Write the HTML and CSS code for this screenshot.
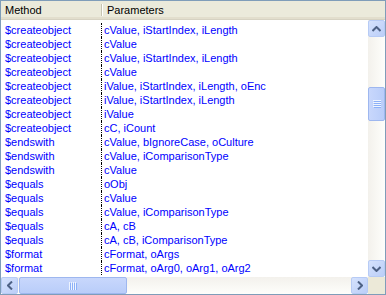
FILE: index.html
```html
<!DOCTYPE html>
<html>
<head>
<meta charset="utf-8">
<link rel="stylesheet" href="styles.css">
</head>
<body>
<div class="win">
  <div class="header">
    <div class="hcell c1">Method</div>
    <div class="hcell c2">Parameters</div>
  </div>
  <div class="main">
    <div class="content">
      <div class="rows">
        <div class="row"><div class="cell c1">$createobject</div><div class="cell c2">cValue, iStartIndex, iLength</div></div>
        <div class="row"><div class="cell c1">$createobject</div><div class="cell c2">cValue</div></div>
        <div class="row"><div class="cell c1">$createobject</div><div class="cell c2">cValue, iStartIndex, iLength</div></div>
        <div class="row"><div class="cell c1">$createobject</div><div class="cell c2">cValue</div></div>
        <div class="row"><div class="cell c1">$createobject</div><div class="cell c2">iValue, iStartIndex, iLength, oEnc</div></div>
        <div class="row"><div class="cell c1">$createobject</div><div class="cell c2">iValue, iStartIndex, iLength</div></div>
        <div class="row"><div class="cell c1">$createobject</div><div class="cell c2">iValue</div></div>
        <div class="row"><div class="cell c1">$createobject</div><div class="cell c2">cC, iCount</div></div>
        <div class="row"><div class="cell c1">$endswith</div><div class="cell c2">cValue, bIgnoreCase, oCulture</div></div>
        <div class="row"><div class="cell c1">$endswith</div><div class="cell c2">cValue, iComparisonType</div></div>
        <div class="row"><div class="cell c1">$endswith</div><div class="cell c2">cValue</div></div>
        <div class="row"><div class="cell c1">$equals</div><div class="cell c2">oObj</div></div>
        <div class="row"><div class="cell c1">$equals</div><div class="cell c2">cValue</div></div>
        <div class="row"><div class="cell c1">$equals</div><div class="cell c2">cValue, iComparisonType</div></div>
        <div class="row"><div class="cell c1">$equals</div><div class="cell c2">cA, cB</div></div>
        <div class="row"><div class="cell c1">$equals</div><div class="cell c2">cA, cB, iComparisonType</div></div>
        <div class="row"><div class="cell c1">$format</div><div class="cell c2">cFormat, oArgs</div></div>
        <div class="row"><div class="cell c1">$format</div><div class="cell c2">cFormat, oArg0, oArg1, oArg2</div></div>
      </div>
    </div>
    <div class="vscroll">
      <div class="sbtn"><svg width="9" height="6" viewBox="0 0 9 6"><path d="M0.5 5 L4.5 1 L8.5 5" fill="none" stroke="#4D6185" stroke-width="2"/></svg></div>
      <div class="vtrack">
        <div class="vthumb"><svg width="8" height="8" viewBox="0 0 8 8"><path d="M0 0.5H8M0 2.5H8M0 4.5H8M0 6.5H8" stroke="#EEF4FE" stroke-width="1"/><path d="M1 1.5H8M1 3.5H8M1 5.5H8M1 7.5H8" stroke="#8CB0F8" stroke-width="1"/></svg></div>
      </div>
      <div class="sbtn"><svg width="9" height="6" viewBox="0 0 9 6"><path d="M0.5 1 L4.5 5 L8.5 1" fill="none" stroke="#4D6185" stroke-width="2"/></svg></div>
    </div>
  </div>
  <div class="hbar">
    <div class="hscroll">
      <div class="sbtn"><svg width="6" height="9" viewBox="0 0 6 9"><path d="M5 0.5 L1 4.5 L5 8.5" fill="none" stroke="#4D6185" stroke-width="2"/></svg></div>
      <div class="htrack">
        <div class="hthumb"><svg width="8" height="8" viewBox="0 0 8 8"><path d="M0.5 0V8M2.5 0V8M4.5 0V8M6.5 0V8" stroke="#EEF4FE" stroke-width="1"/><path d="M1.5 1V8M3.5 1V8M5.5 1V8M7.5 1V8" stroke="#8CB0F8" stroke-width="1"/></svg></div>
      </div>
      <div class="sbtn"><svg width="6" height="9" viewBox="0 0 6 9"><path d="M1 0.5 L5 4.5 L1 8.5" fill="none" stroke="#4D6185" stroke-width="2"/></svg></div>
    </div>
    <div class="corner"></div>
  </div>
</div>
</body>
</html>
```

FILE: styles.css
```css
html, body {
  margin: 0;
  padding: 0;
  background: #ffffff;
}
.win {
  width: 386px;
  height: 295px;
  box-sizing: border-box;
  border: 1px solid #7F9DB9;
  display: flex;
  flex-direction: column;
  font-family: "Liberation Sans", Arial, sans-serif;
  font-size: 11px;
  background: #fff;
  overflow: hidden;
}
.main {
  flex: 1;
  display: flex;
  min-height: 0;
}
.content {
  flex: 1;
  display: flex;
  flex-direction: column;
  min-width: 0;
  overflow: hidden;
}
.header {
  height: 19px;
  flex: none;
  display: flex;
  background: #EBEADB;
  border-bottom: 1px solid #D6D2C2;
  box-shadow: inset 0 -2px 0 #E2DECD;
  box-sizing: border-box;
}
.hcell {
  color: #000;
  line-height: 18px;
  box-sizing: border-box;
  white-space: nowrap;
}
.hcell.c1 {
  width: 101px;
  padding-left: 4px;
  position: relative;
}
.hcell.c1::after {
  content: "";
  position: absolute;
  right: 0;
  top: 3px;
  height: 12px;
  width: 1px;
  background: #C7C5B2;
  box-shadow: 1px 0 0 #fff;
}
.hcell.c2 {
  padding-left: 5px;
  flex: 1;
}
.rows {
  padding-top: 3px;
}
.row {
  display: flex;
  height: 14px;
  line-height: 14px;
  color: #0000FF;
  white-space: nowrap;
}
.cell.c1 {
  width: 101px;
  padding-left: 4px;
  box-sizing: border-box;
  border-right: 1px dotted #000;
}
.cell.c2 {
  padding-left: 2px;
}
.vscroll {
  width: 17px;
  flex: none;
  display: flex;
  flex-direction: column;
  background: linear-gradient(to right, #F3F1EC, #FEFEFB);
}
.sbtn {
  width: 17px;
  height: 17px;
  box-sizing: border-box;
  border: 1px solid #B7CBF5;
  border-radius: 2px;
  background: linear-gradient(135deg, #D5E2FD, #BBCEF8);
  display: flex;
  align-items: center;
  justify-content: center;
  flex: none;
}
.vtrack {
  flex: 1;
  position: relative;
}
.vthumb {
  position: absolute;
  left: 0;
  top: 50px;
  width: 17px;
  height: 34px;
  box-sizing: border-box;
  border: 1px solid #9EB7EF;
  border-radius: 2px;
  background: linear-gradient(to right, #C8D7FC, #B9CDF9);
  display: flex;
  align-items: center;
  justify-content: center;
}
.hbar {
  height: 17px;
  flex: none;
  display: flex;
}
.hscroll {
  flex: 1;
  display: flex;
  background: linear-gradient(to bottom, #F3F1EC, #FEFEFB);
}
.htrack {
  flex: 1;
  position: relative;
}
.hthumb {
  position: absolute;
  top: 0;
  left: 1px;
  width: 108px;
  height: 17px;
  box-sizing: border-box;
  border: 1px solid #9EB7EF;
  border-radius: 2px;
  background: linear-gradient(to bottom, #C8D7FC, #B9CDF9);
  display: flex;
  align-items: center;
  justify-content: center;
}
.corner {
  width: 17px;
  background: #ECE9D8;
}
```
